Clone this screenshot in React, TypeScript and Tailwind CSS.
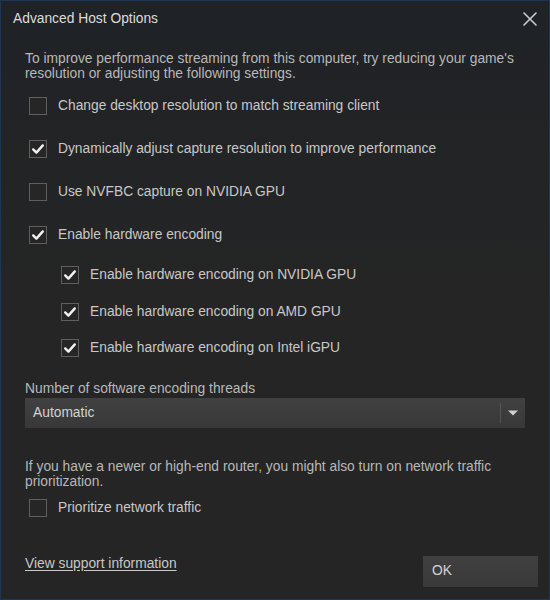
const font = { fontFamily: '"Liberation Sans", Arial, sans-serif' };

function Check({ checked }: { checked: boolean }) {
  return (
    <span className="w-[18px] h-[18px] shrink-0 border border-[#5f5f5f] bg-[#262626] flex items-center justify-center">
      {checked && (
        <svg width="14" height="14" viewBox="0 0 14 14">
          <path d="M2.2 7.4 L5.4 10.6 L11.8 3.4" fill="none" stroke="#f2f2f2" strokeWidth="2.4" strokeLinecap="round" strokeLinejoin="round" />
        </svg>
      )}
    </span>
  );
}

function Option({ label, checked, indent = false }: { label: string; checked: boolean; indent?: boolean }) {
  return (
    <label className={`flex items-center gap-[11px] h-[18px] ${indent ? 'pl-[36px]' : 'pl-[4px]'}`}>
      <Check checked={checked} />
      <span className="text-[13.8px] text-[#c8c8c8] leading-[18px]">{label}</span>
    </label>
  );
}

export default function App() {
  return (
    <div className="w-[550px] h-[600px] border border-[#1c3754] bg-gradient-to-b from-[#1f2226] via-[#252525] to-[#252525] flex flex-col" style={font}>
      <div className="h-[36px] flex items-center justify-between pl-[12px] pr-[12px]">
        <span className="text-[13.8px] text-[#dcdcdc]">Advanced Host Options</span>
        <svg width="14" height="14" viewBox="0 0 14 14">
          <path d="M1 1 L13 13 M13 1 L1 13" stroke="#cccccc" strokeWidth="1.6" strokeLinecap="round" />
        </svg>
      </div>

      <div className="px-[24px] flex flex-col">
        <p className="mt-[14px] text-[13.8px] leading-[15px] text-[#b8b8b8]">
          To improve performance streaming from this computer, try reducing your game's resolution or adjusting the following settings.
        </p>

        <div className="mt-[16px] flex flex-col gap-[25px]">
          <Option label="Change desktop resolution to match streaming client" checked={false} />
          <Option label="Dynamically adjust capture resolution to improve performance" checked />
          <Option label="Use NVFBC capture on NVIDIA GPU" checked={false} />
          <Option label="Enable hardware encoding" checked />
        </div>

        <div className="mt-[22px] flex flex-col gap-[18.5px]">
          <Option label="Enable hardware encoding on NVIDIA GPU" checked indent />
          <Option label="Enable hardware encoding on AMD GPU" checked indent />
          <Option label="Enable hardware encoding on Intel iGPU" checked indent />
        </div>

        <p className="mt-[24px] text-[13.8px] leading-[15px] text-[#b8b8b8]">Number of software encoding threads</p>
        <div className="mt-[2px] h-[30px] bg-gradient-to-b from-[#414141] to-[#383838] flex items-center justify-between pl-[8px]">
          <span className="text-[13.8px] text-[#d2d2d2]">Automatic</span>
          <div className="flex items-center h-full">
            <span className="w-px h-[20px] bg-[#555555]" />
            <svg width="24" height="30" viewBox="0 0 24 30">
              <path d="M7 12.5 H17 L12 17.5 Z" fill="#d0d0d0" />
            </svg>
          </div>
        </div>

        <p className="mt-[31px] text-[13.8px] leading-[15px] text-[#b8b8b8]">
          If you have a newer or high-end router, you might also turn on network traffic prioritization.
        </p>
        <div className="mt-[10px]">
          <Option label="Prioritize network traffic" checked={false} />
        </div>
      </div>

      <div className="mt-auto mb-[10px] flex items-center justify-between pl-[24px] pr-[11px]">
        <span className="text-[13.8px] text-[#c8c8c8] underline underline-offset-2 mb-[14px]">View support information</span>
        <button className="w-[115px] h-[31px] bg-gradient-to-b from-[#404040] to-[#393939] text-left pl-[9px] text-[13.8px] text-[#d4d4d4]">
          OK
        </button>
      </div>
    </div>
  );
}
